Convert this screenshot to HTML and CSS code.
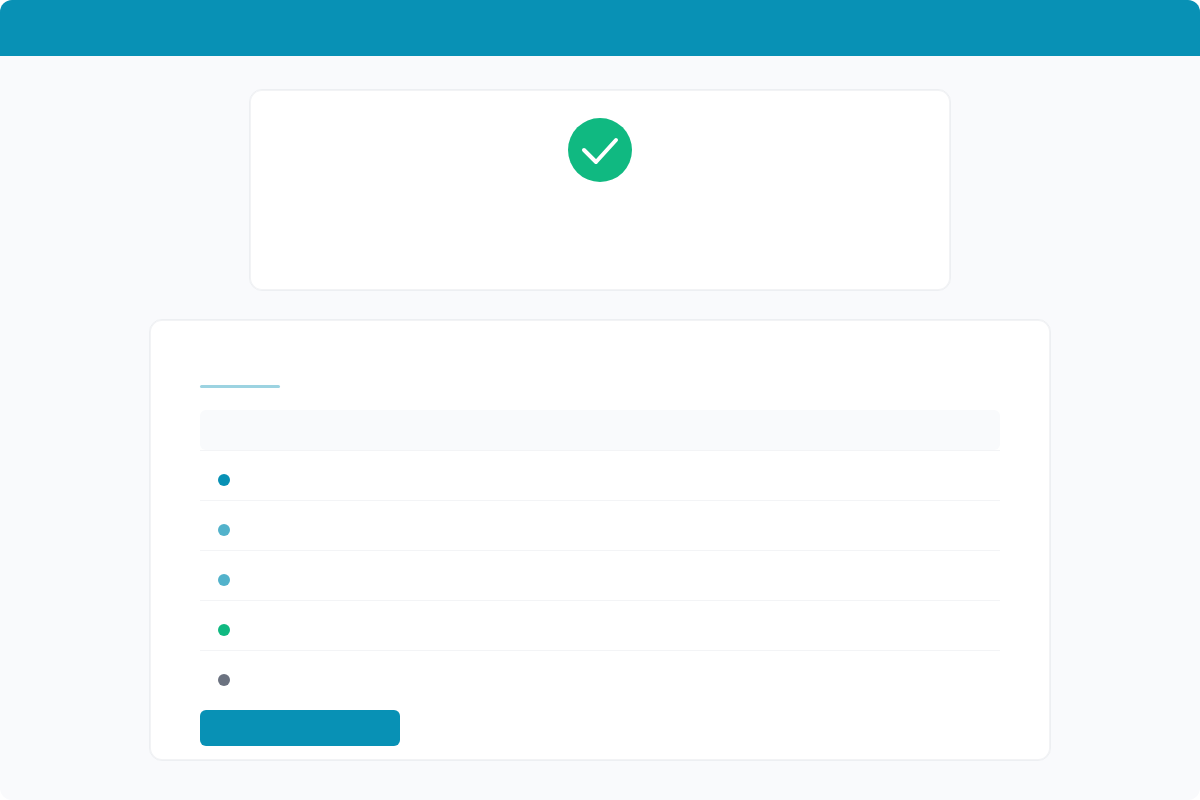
FILE: index.html
```html
<!DOCTYPE html>
<html lang="en">
<head>
  <meta charset="UTF-8">
  <meta name="viewport" content="width=device-width, initial-scale=1">
  <title>Status</title>
  <link rel="stylesheet" href="styles.css">
</head>
<body>
  <div class="page">
    <header class="topbar"></header>

    <main class="content">
      <section class="card status">
        <svg class="status-icon" viewBox="0 0 64 64" aria-hidden="true">
          <circle cx="32" cy="32" r="32" fill="#10b981"/>
          <path d="M16 32 L28 44 L48 22" fill="none" stroke="#fff" stroke-width="4" stroke-linecap="round" stroke-linejoin="round"/>
        </svg>
      </section>

      <section class="card details">
        <div class="accent"></div>
        <table class="list">
          <thead>
            <tr><th></th></tr>
          </thead>
          <tbody>
            <tr><td><span class="dot primary"></span></td></tr>
            <tr><td><span class="dot light"></span></td></tr>
            <tr><td><span class="dot light"></span></td></tr>
            <tr><td><span class="dot success"></span></td></tr>
            <tr><td><span class="dot muted"></span></td></tr>
          </tbody>
        </table>
        <button class="action" type="button"></button>
      </section>
    </main>
  </div>
</body>
</html>
```
FILE: styles.css
```css
* {
  box-sizing: border-box;
}
body {
  margin: 0;
  background: #fff;
  font-family: "Liberation Sans", Arial, sans-serif;
}
.page {
  min-height: 100vh;
  background: #f9fafc;
  border-radius: 12px;
  overflow: hidden;
}
.topbar {
  height: 56px;
  background: #0891b5;
}
.content {
  display: flex;
  flex-direction: column;
  align-items: center;
  gap: 28px;
  padding: 33px 24px;
}
.card {
  width: 100%;
  background: #fff;
  border: 1px solid #edeff2;
  border-radius: 13px;
  box-shadow: inset 0 0 0 1px #f2f3f5;
}
.status {
  max-width: 702px;
  min-height: 202px;
  padding: 28px;
  text-align: center;
}
.status-icon {
  display: block;
  width: 64px;
  height: 64px;
  margin: 0 auto;
}
.details {
  max-width: 902px;
  padding: 65px 50px 14px;
}
.accent {
  width: 80px;
  height: 3px;
  margin-bottom: 22px;
  background: #9cd3e1;
  border-radius: 2px;
}
.list {
  width: 100%;
  margin-bottom: 10px;
  border-collapse: separate;
  border-spacing: 0;
}
.list th {
  height: 40px;
  padding: 0;
  background: #f9fafc;
  border-radius: 6px;
}
.list td {
  height: 50px;
  padding: 23px 18px 0;
  border-top: 1px solid #f3f4f6;
  vertical-align: top;
}
.dot {
  display: block;
  width: 12px;
  height: 12px;
  border-radius: 50%;
}
.primary {
  background: #0891b5;
}
.light {
  background: #52b2cb;
}
.success {
  background: #10b981;
}
.muted {
  background: #6b7280;
}
.action {
  display: block;
  width: 200px;
  height: 36px;
  padding: 0;
  border: none;
  border-radius: 6px;
  background: #0891b5;
  cursor: pointer;
}
```
